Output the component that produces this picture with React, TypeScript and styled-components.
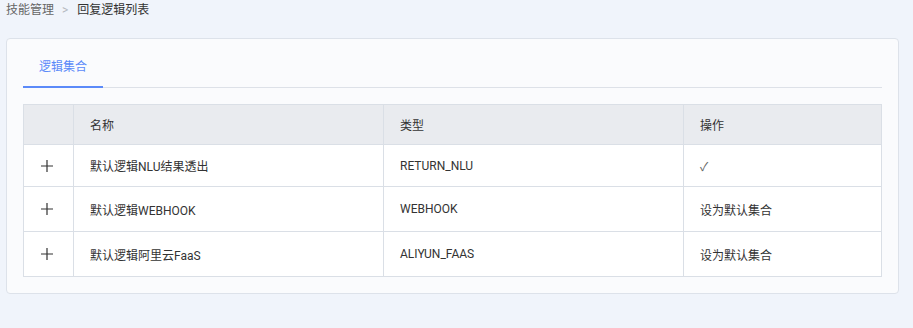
import React from "react";
import styled, { createGlobalStyle } from "styled-components";

const GlobalStyle = createGlobalStyle`
	html, body {
		margin: 0;
		padding: 0;
		background: #f0f4fb;
		font-family: Roboto, "Noto Sans CJK SC", "Noto Sans", sans-serif;
		font-size: 12px;
		color: #333;
	}
`;

const Page = styled.div`
	padding: 0 14px 0 6px;
	min-height: 328px;
	box-sizing: border-box;
`;

const Breadcrumb = styled.div`
	display: flex;
	align-items: center;
	height: 20px;
	margin-bottom: 18px;
	font-size: 12px;
	line-height: 20px;
`;

const Crumb = styled.span<{ $current?: boolean }>`
	color: ${(p) => (p.$current ? "#333" : "#666")};
`;

const Separator = styled.span`
	margin: 0 9px 0 8px;
	color: #b5b9c0;
	font-size: 12px;
`;

const Card = styled.div`
	background: #fafbfd;
	border: 1px solid #dde2ea;
	border-radius: 4px;
	padding: 16px;
`;

const TabBar = styled.div`
	display: flex;
	border-bottom: 1px solid #dde1e8;
	margin-bottom: 16px;
`;

const Tab = styled.div<{ $active?: boolean }>`
	padding: 0 16px 6px;
	line-height: 25px;
	color: ${(p) => (p.$active ? "#5b8af9" : "#333")};
	border-bottom: 2px solid ${(p) => (p.$active ? "#5b8af9" : "transparent")};
	margin-bottom: -1px;
	cursor: pointer;
`;

const Table = styled.table`
	width: 100%;
	border-collapse: collapse;
	table-layout: fixed;
	background: #fff;
	font-size: 12px;
`;

const Col = styled.col<{ $w?: number }>`
	width: ${(p) => (p.$w ? `${p.$w}px` : "auto")};
`;

const Th = styled.th`
	height: 39px;
	padding: 0 16px;
	text-align: left;
	font-weight: normal;
	color: #333;
	background: #e9ebef;
	border: 1px solid #dadfe6;
`;

const Td = styled.td<{ $h: number }>`
	height: ${(p) => p.$h}px;
	padding: 0 16px;
	border: 1px solid #dadfe6;
	color: #333;
	white-space: nowrap;
`;

const ExpandCell = styled(Td)`
	padding: 0 0 0 17px;
`;

const Check = styled.span`
	color: #666;
`;

const PlusIcon = () => (
	<svg width="12" height="12" viewBox="0 0 12 12" style={{ display: "block" }}>
		<path d="M6 0v12M0 6h12" stroke="#333" strokeWidth="1.2" fill="none" />
	</svg>
);

const rows = [
	{ name: "默认逻辑NLU结果透出", type: "RETURN_NLU", action: "check", h: 41 },
	{ name: "默认逻辑WEBHOOK", type: "WEBHOOK", action: "设为默认集合", h: 44 },
	{ name: "默认逻辑阿里云FaaS", type: "ALIYUN_FAAS", action: "设为默认集合", h: 44 },
];

const App = () => {
	return (
		<Page>
			<GlobalStyle />
			<Breadcrumb>
				<Crumb>技能管理</Crumb>
				<Separator>&gt;</Separator>
				<Crumb $current>回复逻辑列表</Crumb>
			</Breadcrumb>

			<Card>
				<TabBar>
					<Tab $active>逻辑集合</Tab>
				</TabBar>

				<Table>
					<colgroup>
						<Col $w={50} />
						<Col $w={310} />
						<Col $w={300} />
						<Col />
					</colgroup>
					<thead>
						<tr>
							<Th />
							<Th>名称</Th>
							<Th>类型</Th>
							<Th>操作</Th>
						</tr>
					</thead>
					<tbody>
						{rows.map((r) => (
							<tr key={r.type}>
								<ExpandCell $h={r.h}>
									<PlusIcon />
								</ExpandCell>
								<Td $h={r.h}>{r.name}</Td>
								<Td $h={r.h}>{r.type}</Td>
								<Td $h={r.h}>{r.action === "check" ? <Check>✓</Check> : r.action}</Td>
							</tr>
						))}
					</tbody>
				</Table>
			</Card>
		</Page>
	);
};

export default App;
